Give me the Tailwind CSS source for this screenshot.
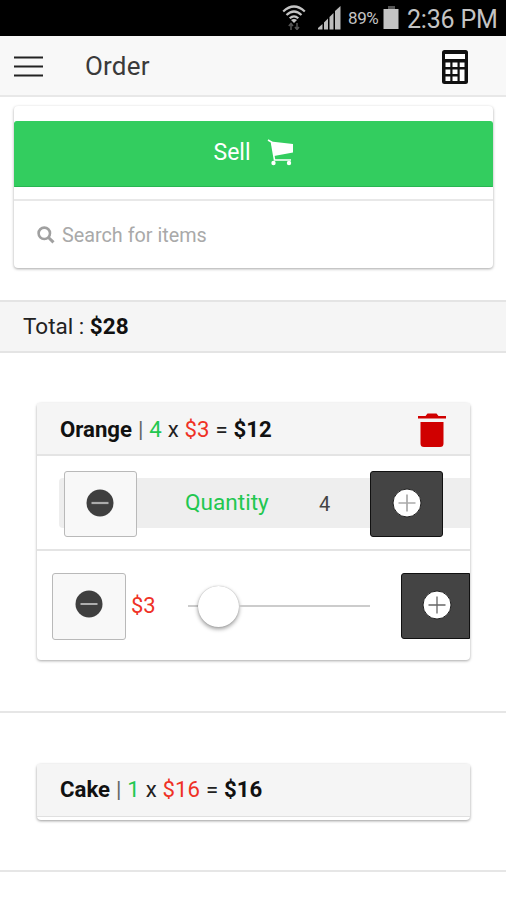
<!DOCTYPE html>
<html lang="en">
<head>
<meta charset="utf-8">
<title>Order</title>
<script src="https://cdn.jsdelivr.net/npm/@tailwindcss/browser@4"></script>
</head>
<body class="w-[506px] h-[900px] overflow-hidden bg-white font-[Roboto,sans-serif] text-[#222] flex flex-col whitespace-nowrap">
  <div class="h-9 shrink-0 bg-black flex items-center justify-end pr-[9px] text-[#c4c4c4]">
    <svg class="w-6 h-[26px] mr-[11px] mt-[-3px]" viewBox="0 0 24 26" fill="none" stroke="#c4c4c4" stroke-width="2.2">
      <path d="M1.2 7.500Q12 -2.500 22.800 7.500M4.500 11Q12 4 19.500 11M7.700 14.300Q12 10.300 16.300 14.300"/>
      <path d="M9 16L12 19L15 16Q12 14 9 16Z" fill="#c4c4c4" stroke="none"/>
      <path d="M9 26V19.500M6.800 22L9 19.500L11 22M15 19V25.500M13 23L15 25.500L17 23" stroke="#555" stroke-width="1.500"/>
    </svg>
    <svg class="w-6 h-6 mr-[7px]" viewBox="0 0 24 24">
      <path d="M1 23.500V22L5.500 18V23.500ZM7 23.500V16.500L11 12.500V23.500ZM12.500 23.500V11L16.500 7V23.500Z" fill="#bdbdbd"/>
      <path d="M18 23.500V5L23.500 0V23.500Z" fill="#bdbdbd"/>
    </svg>
    <span class="w-[31px] mt-[2px] text-[17px] tracking-[-0.4px]">89%</span>
    <svg class="w-4 h-6 ml-1 mr-[8px] mt-[-1px]" viewBox="0 0 16 24"><path d="M5 0h7v3H5z" fill="#555"/><path d="M.5 3h15v20H.5z" fill="#c4c4c4"/></svg>
    <span class="text-[25px] w-[90px] leading-9 pt-[3px] tracking-[-0.2px]">2:36 PM</span>
  </div>
  <header class="h-[61px] shrink-0 bg-[#f8f8f8] border-b-2 border-[#e8e8e8] flex items-center pl-[14px] pr-[38px]">
    <svg class="w-[29px] h-[21px] mt-[2px]" viewBox="0 0 29 21"><path d="M0 1.500h29M0 10.500h29M0 19.500h29" stroke="#222" stroke-width="2.200"/></svg>
    <h1 class="ml-[42px] text-[26px] leading-[30px] tracking-[0.2px] text-[#3a3a3a]">Order</h1>
    <svg class="ml-auto w-[26px] h-[34px] mt-[2px]" viewBox="0 0 26 34">
      <rect width="26" height="34" rx="2.500" fill="#111"/>
      <path fill="#fff" d="M3 4h20v5H3zM3.500 12.500h4.800v4.500H3.500zM10.500 12.500h5v4.500h-5zM17.700 12.500h4.800v4.500h-4.800zM3.500 19.500h4.800v4.500H3.500zM10.500 19.500h5v4.500h-5zM3.500 26.500h4.800v4.500H3.500zM10.500 26.500h5v4.500h-5zM17.700 19.500h4.800v11.500h-4.800z"/>
    </svg>
  </header>

  <section class="mt-[9px] mx-[14px] h-[162px] w-[479px] shrink-0 rounded-sm shadow-[0_1px_3px_rgba(0,0,0,0.35)] flex flex-col pt-[15px]">
    <button class="h-[66px] shrink-0 bg-[#33cd5f] border border-[#33cd5f] border-b-[#28b552] rounded-t-[3px] text-white text-[23px] flex items-center justify-center gap-4 pb-[2px]">
      <span class="mt-[1px]">Sell</span>
      <svg class="w-[27px] h-[27px] mt-[-2px]" viewBox="0 0 27 27">
        <path d="M1 1L4.500 3L7.500 21H24" stroke="#fff" stroke-width="1.600" fill="none"/>
        <path d="M4 2.500L26 5V13.500L7 17Z" fill="#fff"/>
        <circle cx="6.500" cy="24" r="2.200" fill="#fff"/><circle cx="22" cy="24" r="2.200" fill="#fff"/>
      </svg>
    </button>
    <div class="mt-3 border-t-2 border-[#e8e8e8] flex-1 flex items-center pl-[23px] pt-[2px] text-[#a9a9a9] text-[19.8px]">
      <svg class="w-[18px] h-[18px] mr-[7px] mt-[-2px]" viewBox="0 0 18 18" fill="none" stroke="#a0a0a0"><circle cx="7.300" cy="7.300" r="5.700" stroke-width="2.600"/><path d="M11.500 11.500L16.500 16.300" stroke-width="3"/></svg>
      <span>Search for items</span>
    </div>
  </section>

  <div class="mt-[32px] h-[53px] shrink-0 bg-[#f5f5f5] border-y-2 border-[#e4e4e4] flex items-center pl-[23px] text-[22.5px]">
    <span class="whitespace-pre">Total : <b class="text-[#111]">$28</b></span>
  </div>

  <section class="mt-[50px] ml-[37px] h-[257px] w-[433px] shrink-0 rounded-sm shadow-[0_1px_3px_rgba(0,0,0,0.35)] flex flex-col overflow-visible">
    <div class="h-[53px] shrink-0 bg-[#f5f5f5] border-b-2 border-[#e4e4e4] flex items-center pl-[23px] pr-6 text-[22.2px] [word-spacing:0.4px]">
      <span class="pt-[2px]"><b class="text-[#111]">Orange</b> <span class="text-[#666]">|</span> <span class="text-[#22c750]">4</span> x <span class="text-[#ef3125]">$3</span> = <b class="text-[#111]">$12</b></span>
      <svg class="ml-auto w-7 h-[34px] mt-[2px]" viewBox="0 0 28 34" fill="#d00000"><path d="M0 3h7.500L9.500 .5h9L20.500 3H28v2.500H0zM2.500 9h23v21.500q0 3.500-3.500 3.500H6q-3.500 0-3.500-3.500z"/></svg>
    </div>
    <div class="h-[95px] shrink-0 border-b-2 border-[#e4e4e4] flex items-center pl-[22px]">
      <div class="flex-1 h-[50px] bg-[#eee] rounded-l flex items-center pl-[5px] mt-[1px]">
        <button class="w-[73px] h-[66px] mt-px shrink-0 bg-[#f8f8f8] border-[1.5px] border-[#b9b9b9] rounded-[3px] flex items-center justify-center pr-px pb-[2px]">
          <svg class="w-7 h-7" viewBox="0 0 28 28"><circle cx="14" cy="14" r="13.500" fill="#3f3f3f"/><path d="M5.500 14h17" stroke="#aaa" stroke-width="2.200"/></svg>
        </button>
        <span class="w-[84px] ml-[48px] text-[22.6px] text-[#22c750]">Quantity</span>
        <span class="ml-[50px] w-[14px] mt-px text-[20px] text-[#444]">4</span>
        <button class="ml-auto mr-[27px] mt-px w-[73px] h-[66px] shrink-0 bg-[#444] border-[1.5px] border-[#111] rounded-[3px] flex items-center justify-center pb-[2px]">
          <svg class="w-[30px] h-[30px]" viewBox="0 0 30 30"><circle cx="15" cy="15" r="14" fill="#fff" stroke="#222"/><path d="M6.500 15h17M15 6.500v17" stroke="#aaa" stroke-width="1.700"/></svg>
        </button>
      </div>
    </div>
    <div class="flex-1 flex items-center overflow-hidden pl-[15px] pt-[1px]">
      <button class="w-[74px] h-[67px] shrink-0 bg-[#f8f8f8] border-[1.5px] border-[#b9b9b9] rounded-[3px] flex items-center justify-center pb-[4px] pr-px">
        <svg class="w-7 h-7" viewBox="0 0 28 28"><circle cx="14" cy="14" r="13.500" fill="#3f3f3f"/><path d="M5.500 14h17" stroke="#ddd" stroke-width="1.400"/></svg>
      </button>
      <span class="ml-[5px] w-[57px] mt-[-2px] text-[22px] text-[#ef3125]">$3</span>
      <div class="w-[182px] h-[41px] flex items-center">
        <div class="w-[10px] h-[2.5px] bg-[#ccc]"></div>
        <div class="size-[41px] rounded-full bg-white shadow-[0_2px_4px_rgba(0,0,0,0.4),0_0_1px_rgba(0,0,0,0.3)]"></div>
        <div class="flex-1 h-[2.5px] bg-[#ccc]"></div>
      </div>
      <button class="ml-[31px] w-[69px] h-[66px] shrink-0 bg-[#444] border-[1.5px] border-[#111] rounded-l-[3px] flex items-center pl-5 pb-[3px]">
        <svg class="w-[30px] h-[30px]" viewBox="0 0 30 30"><circle cx="15" cy="15" r="14" fill="#fff" stroke="#222"/><path d="M6.500 15h17M15 6.500v17" stroke="#666" stroke-width="1.300"/></svg>
      </button>
    </div>
  </section>

  <div class="mt-[51px] h-[2px] shrink-0 bg-[#e6e6e6]"></div>

  <section class="mt-[51px] ml-[37px] w-[433px] h-[56px] shrink-0 rounded-sm shadow-[0_1px_3px_rgba(0,0,0,0.4)]">
    <div class="h-[53px] bg-[#f5f5f5] border-b border-[#e0e0e0] flex items-center pl-[23px] text-[22.2px] [word-spacing:0.4px]">
      <span><b class="text-[#111]">Cake</b> <span class="text-[#666]">|</span> <span class="text-[#22c750]">1</span> x <span class="text-[#ef3125]">$16</span> = <b class="text-[#111]">$16</b></span>
    </div>
  </section>

  <div class="mt-[50px] h-[2px] shrink-0 bg-[#e6e6e6]"></div>
</body>
</html>
